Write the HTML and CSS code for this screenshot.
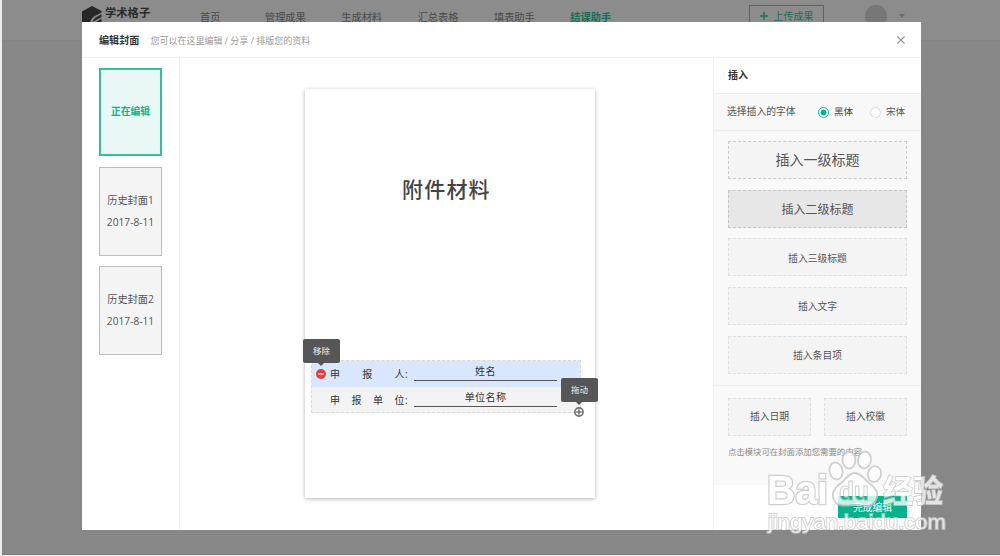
FILE: index.html
```html
<!DOCTYPE html>
<html lang="zh-CN">

<head>
    <meta charset="UTF-8">
    <meta name="viewport" content="width=device-width, initial-scale=1.0">
    <title>学术格子 - 编辑封面</title>
    <link rel="stylesheet" href="styles.css">
</head>

<body>
    <div class="page">
        <header class="topbar">
            <div class="logo">
                <svg width="20" height="22" viewBox="0 0 20 22">
                    <path d="M10 0L19.5 5V6.5L12 10.500Q8.500 13 8.500 16V21L0 17V5.500z" fill="#272727" />
                    <path d="M19.500 8V11L10.500 16Q11 13.500 13 12zM19.500 12.500V17L10.500 21.500V18.500z" fill="#272727" />
                </svg>
                <span>学术格子</span>
            </div>
            <nav class="nav">
                <a class="home">首页</a>
                <a>管理成果</a>
                <a>生成材料</a>
                <a>汇总表格</a>
                <a>填表助手</a>
                <a class="active">结课助手</a>
            </nav>
            <div class="upload">
                <svg width="8" height="8" viewBox="0 0 8 8"><path d="M4 0v8M0 4h8" stroke="#1d7059" stroke-width="1.5" /></svg>
                <span>上传成果</span>
            </div>
            <div class="avatar"></div>
            <div class="caret"></div>
        </header>
    </div>

    <div class="modal">
        <div class="modal-header">
            <h1>编辑封面</h1>
            <p>您可以在这里编辑 / 分享 / 排版您的资料</p>
            <svg class="close" width="8" height="8" viewBox="0 0 8 8"><path d="M.5.5l7 7M7.500.5l-7 7" stroke="#988f92" stroke-width="1.100" /></svg>
        </div>

        <div class="modal-body">
            <aside class="history">
                <div class="thumb current">正在编辑</div>
                <div class="thumb">历史封面1<br>2017-8-11</div>
                <div class="thumb">历史封面2<br>2017-8-11</div>
            </aside>

            <main class="canvas">
                <div class="paper">
                    <h2>附件材料</h2>
                    <div class="fields">
                        <div class="field selected">
                            <span class="label">申报人</span><span class="colon">:</span>
                            <span class="value">姓名</span>
                        </div>
                        <div class="field">
                            <span class="label">申报单位</span><span class="colon">:</span>
                            <span class="value">单位名称</span>
                        </div>
                        <div class="tip tip-remove">移除</div>
                        <svg class="icon-remove" width="10" height="10" viewBox="0 0 10 10">
                            <circle cx="5" cy="5" r="5" fill="#f0393a" />
                            <path d="M2.200 5h5.600" stroke="#fff" stroke-width="1.300" />
                        </svg>
                        <div class="tip tip-drag">拖动</div>
                        <svg class="icon-drag" width="10" height="10" viewBox="0 0 10 10">
                            <circle cx="5" cy="5" r="4.100" fill="#fff" stroke="#6e6e6e" stroke-width="1.600" />
                            <path d="M5 2.300v5.400M2.300 5h5.400" stroke="#6e6e6e" stroke-width="1.400" />
                        </svg>
                    </div>
                </div>
            </main>

            <aside class="insert">
                <h3>插入</h3>
                <div class="fonts">
                    <span class="fonts-label">选择插入的字体</span>
                    <span class="radio checked"></span>
                    <span class="fonts-name hei">黑体</span>
                    <span class="radio"></span>
                    <span class="fonts-name song">宋体</span>
                </div>
                <div class="blocks">
                    <div class="block level1">插入一级标题</div>
                    <div class="block level2">插入二级标题</div>
                    <div class="block level3">插入三级标题</div>
                    <div class="block">插入文字</div>
                    <div class="block">插入条目项</div>
                </div>
                <div class="extras">
                    <div class="extras-row">
                        <div class="block">插入日期</div>
                        <div class="block">插入校徽</div>
                    </div>
                    <p>点击模块可在封面添加您需要的内容</p>
                </div>
                <div class="actions">
                    <div class="done">完成编辑</div>
                </div>
            </aside>
        </div>
    </div>

    <!-- watermark -->
    <svg class="watermark" width="195" height="104" viewBox="0 0 195 104">
        <mask id="paw">
            <rect width="195" height="104" fill="#fff" />
            <text class="mark-du" x="79" y="66" textLength="30" lengthAdjust="spacingAndGlyphs" fill="#000">du</text>
        </mask>
        <g class="mark">
            <text class="mark-bai" x="7" y="70" textLength="61" lengthAdjust="spacingAndGlyphs">Bai</text>
            <ellipse cx="76" cy="37" rx="6.500" ry="8.500" transform="rotate(-12 76 37)" />
            <ellipse cx="89" cy="26" rx="6.500" ry="8.500" />
            <ellipse cx="104.500" cy="26" rx="6.500" ry="8.500" transform="rotate(8 104.500 26)" />
            <ellipse cx="114.500" cy="40" rx="6.500" ry="8" transform="rotate(15 114.500 40)" />
            <path mask="url(#paw)" d="M95 39C101 39 104 45 109 49C116 54 119 60 116 66C113 73 106 72 95 71C84 72 77 73 74 66C71 60 74 54 81 49C86 45 89 39 95 39z" />
            <text class="mark-du outline" x="79" y="66" textLength="30" lengthAdjust="spacingAndGlyphs" aria-hidden="true">du</text>
            <text class="mark-cjk" x="123" y="68" textLength="60" lengthAdjust="spacingAndGlyphs">经验</text>
            <text class="mark-url" x="8" y="95" textLength="178" lengthAdjust="spacingAndGlyphs">jingyan.baidu.com</text>
        </g>
    </svg>
</body>

</html>
```
FILE: styles.css
```css
/* Global Styles */
* {
    box-sizing: border-box;
}

body {
    margin: 0;
    height: 556px;
    overflow: hidden;
    background: #ececec;
    color: #555;
    font-family: "Open Sans", "Noto Sans CJK SC", sans-serif;
    font-size: 10px;
    line-height: 16px;
}

h1, h2, h3, p {
    margin: 0;
}

/* Dimmed page */
.page {
    height: 555px;
    margin-left: 2px;
    background: #878787;
    border-bottom: 1px solid #7c7c7c;
}

.topbar {
    display: flex;
    height: 41px;
    padding-left: 80px;
    background: #8c8c8c;
    border-bottom: 1px solid #848484;
    color: #4a4a4a;
}

.logo {
    display: flex;
    width: 118px;
    padding-top: 6px;
    color: #2b2b2b;
    font-size: 11.3px;
    font-weight: 700;
}

.logo span {
    margin-left: 3px;
    line-height: 14px;
}

.nav {
    display: flex;
    width: 549px;
    gap: 35.6px;
    padding-top: 9px;
    font-size: 10.2px;
}

.nav .home {
    margin-right: 9px;
}

.nav .active {
    color: #176f56;
    font-weight: 700;
}

.upload {
    display: flex;
    align-items: center;
    justify-content: center;
    gap: 6px;
    width: 75px;
    height: 22px;
    margin-top: 5px;
    border: 1px solid #2d7c66;
    color: #1d7059;
}

.avatar {
    width: 22px;
    height: 22px;
    margin: 5px 0 0 41px;
    border-radius: 50%;
    background: #777;
}

.caret {
    height: 4px;
    margin: 14px 0 0 12px;
    border: 3px solid transparent;
    border-top: 4px solid #6c6c6c;
    border-bottom: 0;
}

/* Modal */
.modal {
    position: absolute;
    left: 82px;
    top: 22px;
    display: flex;
    flex-direction: column;
    width: 839px;
    height: 508px;
    background: #fff;
}

.modal-header {
    display: flex;
    align-items: center;
    height: 36px;
    padding: 0 16px 0 17px;
    border-bottom: 1px solid #f2f2f2;
}

.modal-header h1 {
    color: #333;
    font-size: 10.1px;
}

.modal-header p {
    margin: 3px 0 0 11px;
    color: #999;
    font-size: 9px;
}

.close {
    margin-left: auto;
}

.modal-body {
    display: flex;
    flex: 1;
}

/* Cover history */
.history {
    width: 98px;
    padding: 10px 17px;
    border-right: 1px solid #f2f2f2;
}

.thumb {
    display: flex;
    align-items: center;
    justify-content: center;
    width: 63px;
    height: 89px;
    padding-bottom: 2px;
    margin-bottom: 10px;
    border: 1px solid #bdbdbd;
    background: #f4f4f4;
    font-size: 10.2px;
    line-height: 22px;
    text-align: center;
    white-space: nowrap;
}

.thumb.current {
    height: 88px;
    margin-bottom: 11px;
    padding-bottom: 0;
    border: 2px solid #2fc09d;
    background: #e9f8f5;
    color: #0db58c;
    font-size: 9.8px;
    font-weight: 700;
}

/* Cover */
.canvas {
    width: 533px;
    padding: 31px 0 0 125px;
}

.paper {
    width: 290px;
    height: 409px;
    padding: 85px 0 0 6px;
    background: #fff;
    box-shadow: 0 1px 4px rgba(0, 0, 0, 0.3);
}

.paper h2 {
    padding-left: 91px;
    color: #444;
    font-size: 21px;
    font-weight: 500;
    letter-spacing: 1.2px;
    line-height: 30px;
}

.fields {
    position: relative;
    width: 270px;
    height: 53px;
    margin-top: 156px;
    border: 1px dashed #d9d9d9;
    background: #f3f3f3;
}

.field {
    display: flex;
    height: 26px;
    padding-left: 18px;
    color: #333;
    letter-spacing: 0.4px;
}

.field.selected {
    background: #d8e7fe;
}

.label {
    width: 75px;
    padding-top: 5px;
    text-align: justify;
    text-align-last: justify;
}

.colon {
    width: 9px;
    padding-top: 5px;
}

.value {
    width: 143px;
    height: 20px;
    padding-top: 2px;
    border-bottom: 1px solid #555;
    text-align: center;
}

.tip {
    position: absolute;
    width: 37px;
    height: 24px;
    border-radius: 2px;
    background: #565656;
    color: #eee;
    font-size: 8.5px;
    line-height: 24px;
    text-align: center;
}

.tip::after {
    content: "";
    position: absolute;
    left: 15px;
    top: 24px;
    border: 3.5px solid transparent;
    border-top-color: #565656;
    border-bottom: 0;
}

.tip-remove {
    left: -9px;
    top: -22px;
}

.tip-drag {
    left: 249px;
    top: 17px;
}

.icon-remove {
    position: absolute;
    left: 4px;
    top: 8px;
}

.icon-drag {
    position: absolute;
    left: 262px;
    top: 46px;
}

/* Insert panel */
.insert {
    width: 208px;
    border-left: 1px solid #f0f0f0;
}

.insert h3 {
    height: 36px;
    padding-left: 14px;
    border-bottom: 1px solid #eee;
    color: #333;
    font-size: 10px;
    line-height: 34px;
}

.fonts {
    display: flex;
    align-items: center;
    height: 37px;
    padding-left: 13px;
    border-bottom: 1px solid #eee;
    background: #f8f8f8;
}

.fonts-label {
    width: 91px;
    font-size: 9.8px;
}

.fonts-name {
    width: 36px;
    margin-left: 5px;
}

.hei {
    color: #444;
    font-size: 9.6px;
}

.song {
    width: auto;
    font-size: 9.6px;
}

.radio {
    width: 11px;
    height: 11px;
    border: 1px solid #ddd;
    border-radius: 50%;
    background: #fff;
}

.radio.checked {
    border-color: #12b88f;
    background: radial-gradient(#05b389 2.6px, #fff 3.2px);
}

.blocks {
    display: flex;
    flex-direction: column;
    gap: 10.7px;
    height: 255px;
    padding: 10px 14px 0;
    border-bottom: 1px solid #eee;
    background: #f9f9f9;
}

.block {
    height: 38px;
    border: 1px dashed #dedede;
    background: #f4f4f4;
    font-size: 9.8px;
    line-height: 37px;
    text-align: center;
}

.level1 {
    border-color: #ccc;
    font-size: 14px;
    line-height: 35px;
}

.level2 {
    border-color: #c5c5c5;
    background: #e7e7e7;
    font-size: 12px;
}

.level3 {
    line-height: 39px;
}

.extras {
    height: 99px;
    padding: 12px 14px 0;
    background: #f9f9f9;
}

.extras-row {
    display: flex;
    gap: 13px;
}

.extras-row .block {
    flex: 1;
    line-height: 35px;
}

.extras p {
    margin-top: 8px;
    color: #888;
    font-size: 8.4px;
    line-height: 16px;
}

.actions {
    display: flex;
    justify-content: flex-end;
    padding: 11px 14px 0;
}

.done {
    width: 69px;
    height: 22px;
    background: #04b38a;
    color: #fff;
    font-size: 9.8px;
    line-height: 23px;
    text-align: center;
}

/* Watermark */
.watermark {
    position: absolute;
    left: 760px;
    top: 434px;
}

.mark {
    fill: #fff;
    stroke: #c4c4c4;
    stroke-width: 1.8;
    opacity: 0.78;
}

.mark text {
    paint-order: stroke;
}

.mark-bai {
    font: 700 40px "Liberation Sans", sans-serif;
    stroke-width: 2.6;
}

.mark-du {
    font: 700 25px "Liberation Sans", sans-serif;
}

.mark .outline {
    fill: none;
    stroke-width: 1;
}

.mark-cjk {
    font: 700 31px "Noto Sans CJK SC", sans-serif;
}

.mark-url {
    font: 20px "Liberation Sans", sans-serif;
}
```
